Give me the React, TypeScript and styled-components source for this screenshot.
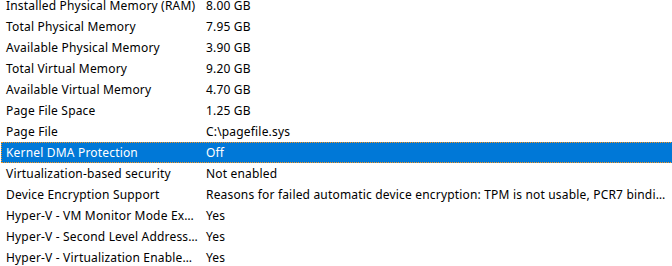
import React from "react";
import styled, { createGlobalStyle } from "styled-components";

const Global = createGlobalStyle`
  html, body { margin: 0; padding: 0; background: #ffffff; overflow: hidden; }
  body { font-family: "Noto Sans", "Open Sans", sans-serif; }
`;

const List = styled.div`
  display: flex;
  flex-direction: column;
  margin-top: -5px;
  padding-left: 1px;
  width: 671px;
  overflow: hidden;
`;

const Row = styled.div<{ $selected?: boolean }>`
  display: grid;
  grid-template-columns: 199px 469px 1fr;
  width: 720px;
  height: 21px;
  box-sizing: border-box;
  border: 1px dotted ${(p) => (p.$selected ? "#f7941d" : "transparent")};
  border-right: none;
  background: ${(p) => (p.$selected ? "#0078d7" : "transparent")};
  color: ${(p) => (p.$selected ? "#ffffff" : "#000000")};
  font-size: 12px;
  letter-spacing: 0.18px;
  line-height: 19px;
`;

const Cell = styled.div<{ $pad: number; $padRight?: number }>`
  padding-left: ${(p) => p.$pad}px;
  padding-right: ${(p) => p.$padRight ?? 0}px;
  min-width: 0;
  white-space: nowrap;
  overflow: hidden;
  text-overflow: ellipsis;
`;

const rows: [string, string][] = [
  ["Installed Physical Memory (RAM)", "8.00 GB"],
  ["Total Physical Memory", "7.95 GB"],
  ["Available Physical Memory", "3.90 GB"],
  ["Total Virtual Memory", "9.20 GB"],
  ["Available Virtual Memory", "4.70 GB"],
  ["Page File Space", "1.25 GB"],
  ["Page File", "C:\\pagefile.sys"],
  ["Kernel DMA Protection", "Off"],
  ["Virtualization-based security", "Not enabled"],
  [
    "Device Encryption Support",
    "Reasons for failed automatic device encryption: TPM is not usable, PCR7 binding is not supported, Hardware Security Test Interface failed and device is not Modern Standby",
  ],
  ["Hyper-V - VM Monitor Mode Extensions", "Yes"],
  ["Hyper-V - Second Level Address Translation Extensions", "Yes"],
  ["Hyper-V - Virtualization Enabled in Firmware", "Yes"],
];

export default function App() {
  return (
    <>
      <Global />
      <List>
        {rows.map(([k, v], i) => (
          <Row key={k} $selected={i === 7}>
            <Cell $pad={4} $padRight={3}>{k}</Cell>
            <Cell $pad={5}>{v}</Cell>
            <Cell $pad={0} />
          </Row>
        ))}
      </List>
    </>
  );
}
